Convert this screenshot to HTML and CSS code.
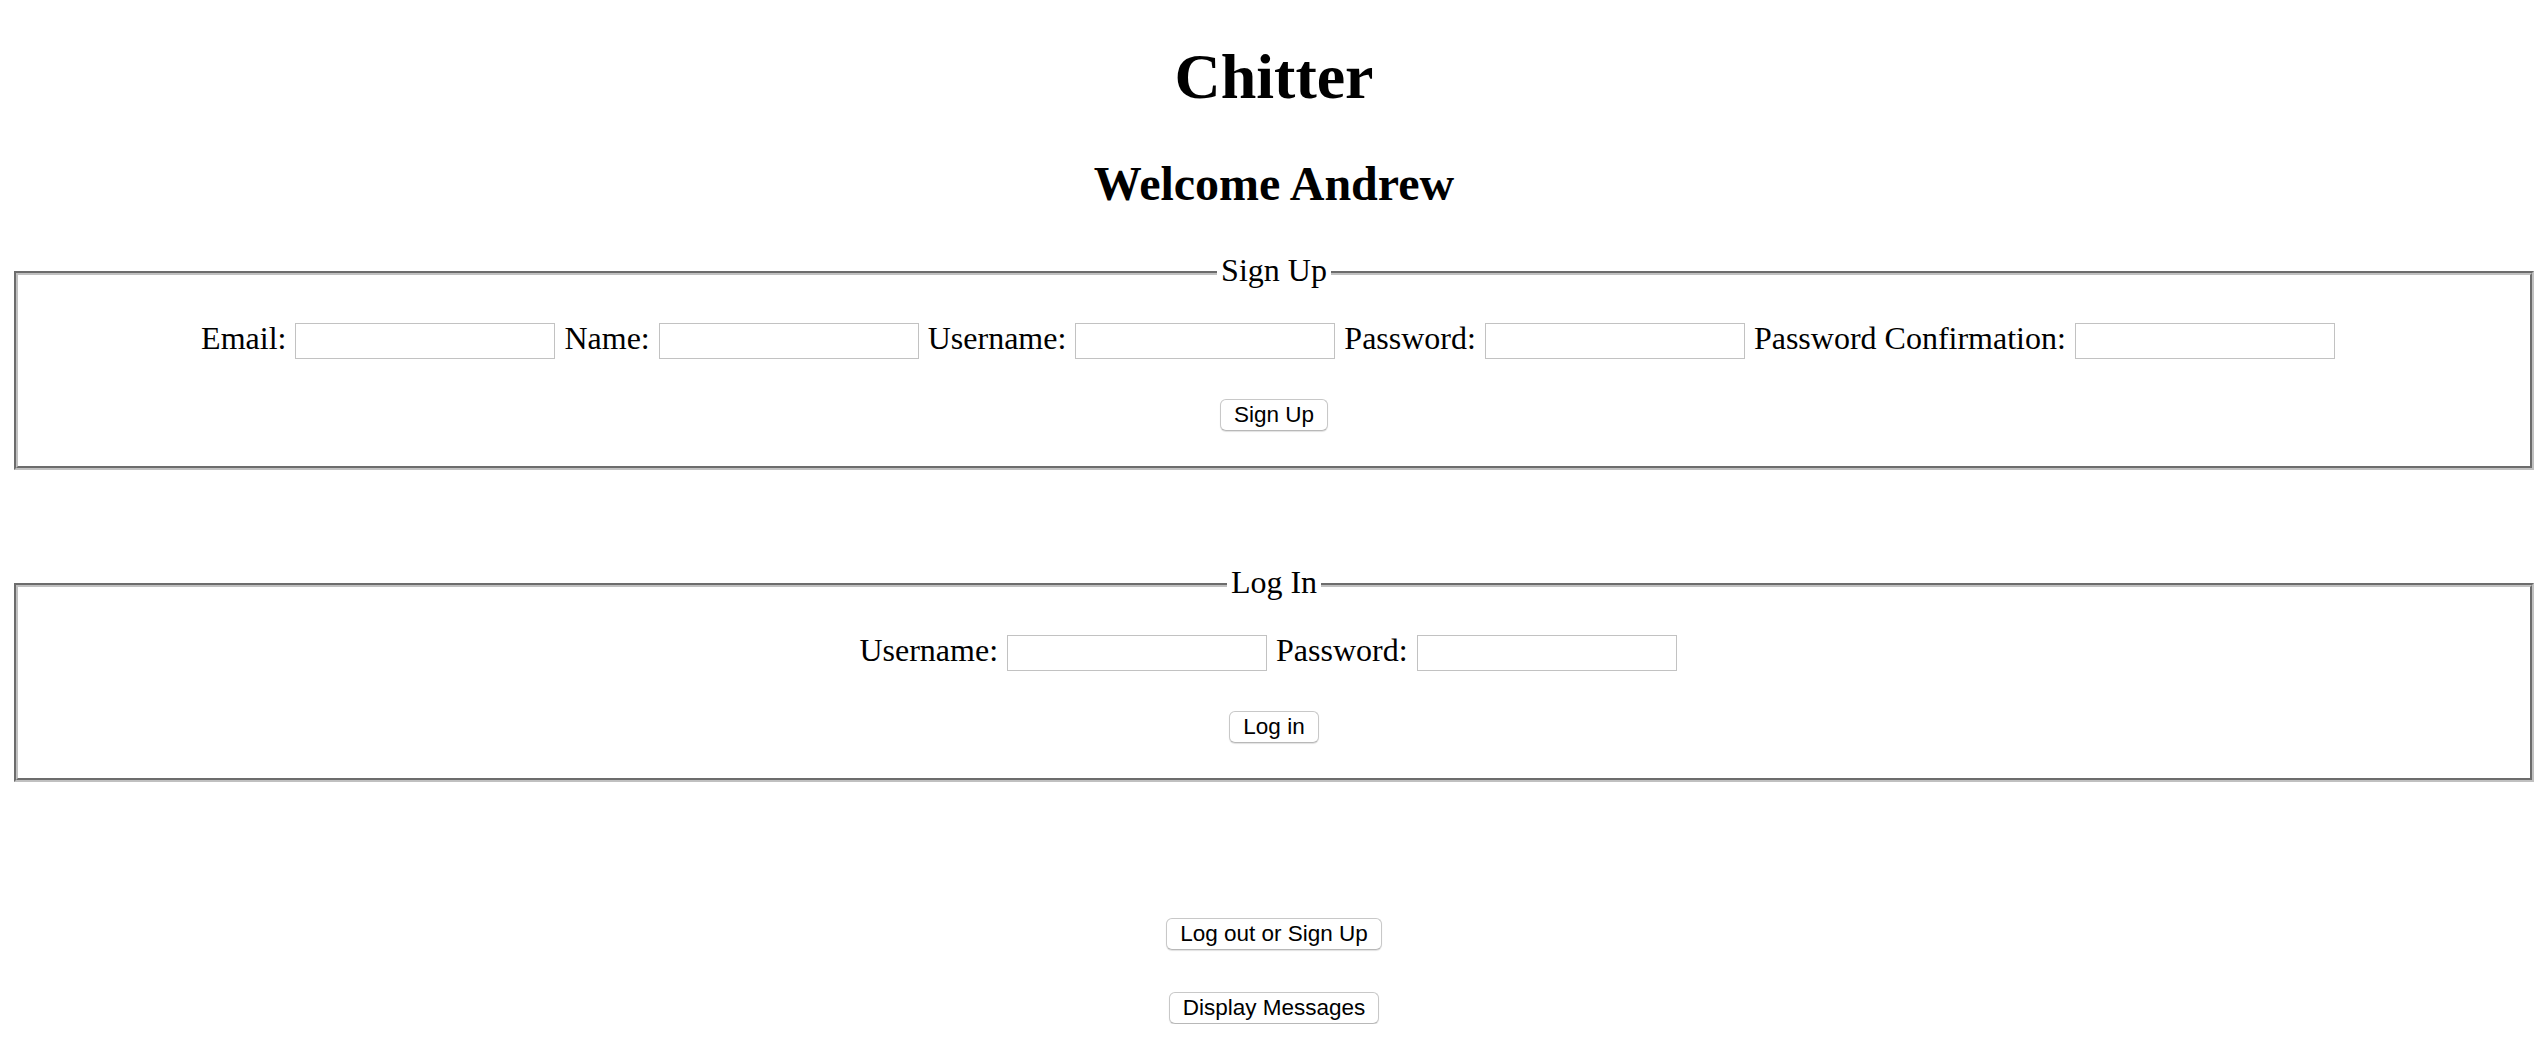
FILE: index.html
```html
<!DOCTYPE html>
<html lang="en">
<head>
<meta charset="utf-8">
<title>Chitter</title>
<link rel="stylesheet" href="styles.css">
</head>
<body>
  <h1 class="title">Chitter</h1>
  <h2 class="welcome">Welcome Andrew</h2>

  <form class="panel">
    <fieldset class="box">
      <legend class="box-title">Sign Up</legend>
      <div class="fields">
        <span class="field-label">Email:</span>
        <input class="field-input" type="text">
        <span class="field-label">Name:</span>
        <input class="field-input" type="text">
        <span class="field-label">Username:</span>
        <input class="field-input" type="text">
        <span class="field-label">Password:</span>
        <input class="field-input" type="password">
        <span class="field-label">Password Confirmation:</span>
        <input class="field-input" type="password">
      </div>
      <div class="actions">
        <button class="btn" type="button">Sign Up</button>
      </div>
    </fieldset>
  </form>

  <form class="panel panel-login">
    <fieldset class="box">
      <legend class="box-title">Log In</legend>
      <div class="fields">
        <span class="field-label">Username:</span>
        <input class="field-input" type="text">
        <span class="field-label">Password:</span>
        <input class="field-input" type="password">
      </div>
      <div class="actions">
        <button class="btn" type="button">Log in</button>
      </div>
    </fieldset>
  </form>

  <div class="nav">
    <button class="btn" type="button">Log out or Sign Up</button>
    <button class="btn" type="button">Display Messages</button>
  </div>
</body>
</html>
```

FILE: styles.css
```css
html {
  background: #fff;
}

body {
  margin: 0 14px;
  font-family: "Liberation Serif", "Times New Roman", Times, serif;
  font-size: 32px;
  color: #000;
  text-align: center;
}

.title {
  font-size: 64px;
  font-weight: bold;
  margin: 39.5px 0 42.88px;
}

.welcome {
  font-size: 48px;
  font-weight: bold;
  margin: 39.84px 0 43px;
}

.panel {
  margin: 0;
}

.panel-login {
  margin-top: 96px;
}

.box {
  margin: 0;
  padding: 0 24px 35px;
  border: 4px groove #c0c0c0;
  min-inline-size: 0;
}

.box-title {
  margin: 0 auto;
  padding: 0 4px;
  font-size: 32px;
  position: relative;
  top: -2px;
}

.fields {
  margin-top: 32px;
  height: 36px;
  padding-right: 12px;
  display: flex;
  justify-content: center;
  align-items: center;
  gap: 9px;
}

.field-label {
  white-space: nowrap;
  position: relative;
  top: -3px;
}

.field-input {
  box-sizing: border-box;
  width: 260px;
  height: 36px;
  margin: 0;
  padding: 0 4px;
  border: 1px solid #c2c2c2;
  border-radius: 0;
  background: #fff;
  font-size: 22px;
  outline: none;
}

.actions {
  margin-top: 40px;
  display: flex;
  justify-content: center;
}

.btn {
  box-sizing: border-box;
  height: 32px;
  margin: 0;
  padding: 0 13px;
  border: 1px solid #c8c8c8;
  border-bottom-color: #b8b8b8;
  border-radius: 6px;
  background: #fff;
  box-shadow: 0 1px 1px rgba(0, 0, 0, 0.12);
  font-family: "Liberation Sans", Arial, Helvetica, sans-serif;
  font-size: 22.5px;
  color: #000;
  line-height: 1;
}

.nav {
  margin-top: 136px;
  display: flex;
  flex-direction: column;
  align-items: center;
  gap: 42px;
}
```
